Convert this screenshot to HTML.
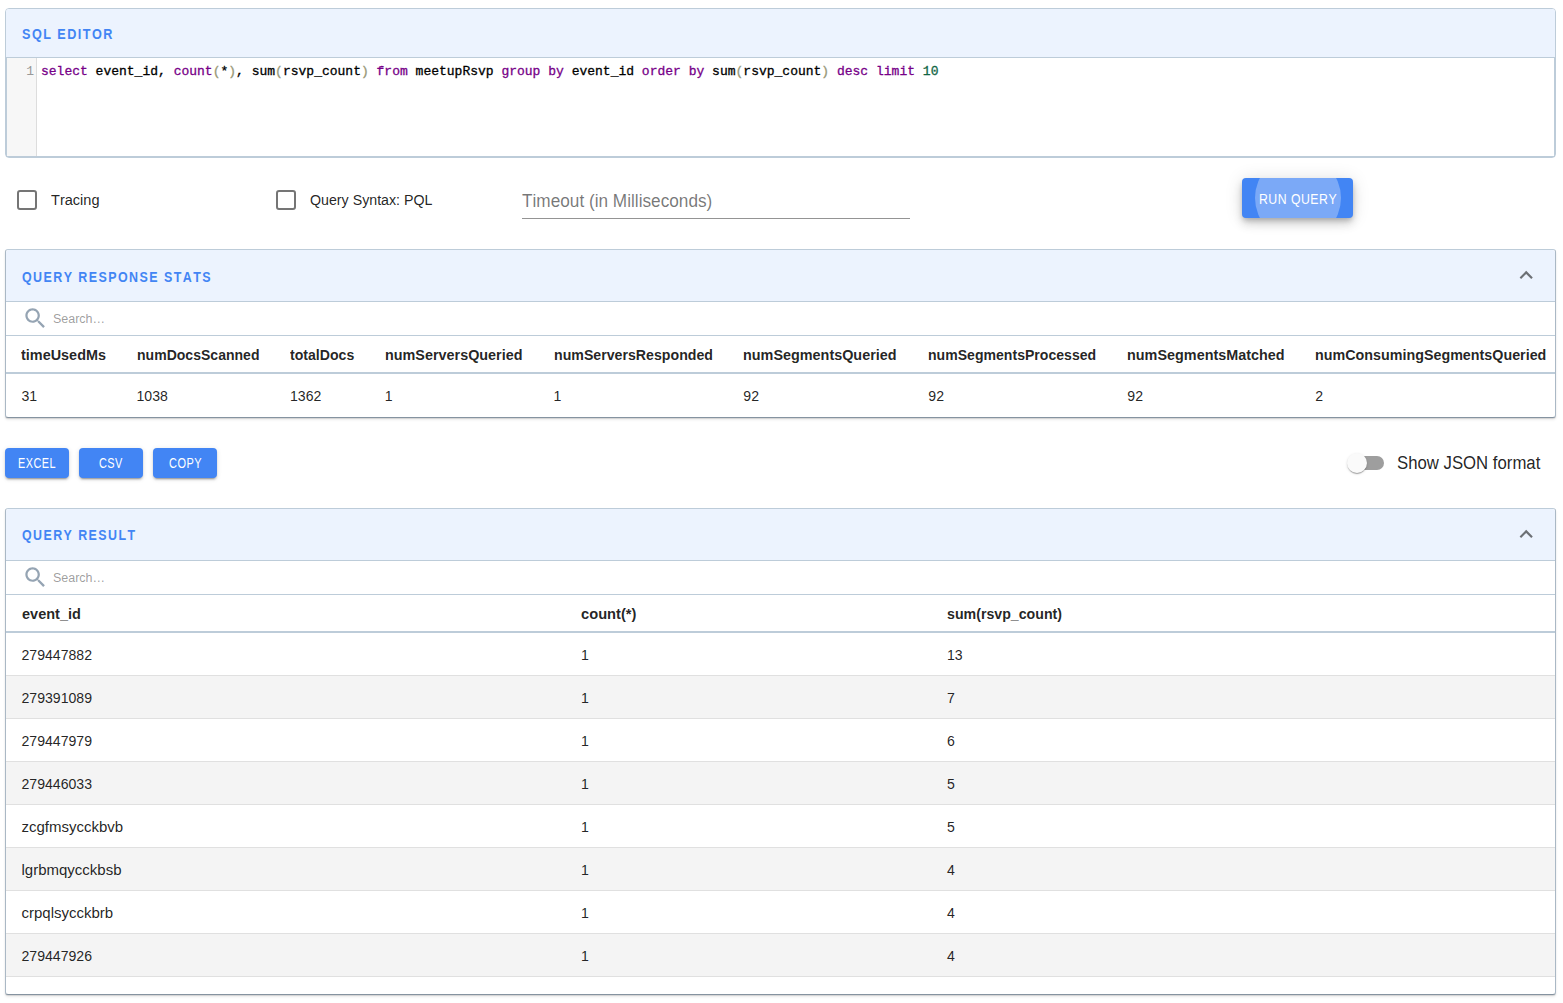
<!DOCTYPE html>
<html><head><meta charset="utf-8"><style>
html,body{margin:0;padding:0;background:#fff;width:1563px;height:1003px;overflow:hidden;position:relative;font-family:"Liberation Sans",sans-serif;}
.t{position:absolute;white-space:pre;transform-origin:0 0;font-kerning:none;}
</style></head><body>
<div style="position:absolute;left:5px;top:8px;width:1551px;height:150px;box-sizing:border-box;border:1px solid #BDCCD9;border-radius:4px;background:#fff;"></div><div style="position:absolute;left:6px;top:9px;width:1549px;height:48px;background:#ECF3FE;border-radius:3px 3px 0 0;"></div><div class="t" style="top:25px;left:21.80px;font-size:15.55px;line-height:17.37px;font-weight:bold;color:#4285F4;letter-spacing:1.8px;transform:scaleX(0.8121);">SQL EDITOR</div><div style="position:absolute;left:6px;top:57px;width:1549px;height:100px;box-sizing:border-box;border:1px solid #BDCCD9;background:#fff;"></div><div style="position:absolute;left:7px;top:58px;width:29px;height:98px;background:#f7f7f7;border-right:1px solid #ddd;"></div><div class="t" style="left:41px;top:65.38px;font-size:13px;line-height:14.73px;font-family:'Liberation Mono',monospace;-webkit-text-stroke:0.3px currentColor;"><span style="color:#708">select</span><span style="color:#000"> event_id, </span><span style="color:#708">count</span><span style="color:#997">(</span><span style="color:#000">*</span><span style="color:#997">)</span><span style="color:#000">, sum</span><span style="color:#997">(</span><span style="color:#000">rsvp_count</span><span style="color:#997">)</span><span style="color:#000"> </span><span style="color:#708">from</span><span style="color:#000"> meetupRsvp </span><span style="color:#708">group</span><span style="color:#000"> </span><span style="color:#708">by</span><span style="color:#000"> event_id </span><span style="color:#708">order</span><span style="color:#000"> </span><span style="color:#708">by</span><span style="color:#000"> sum</span><span style="color:#997">(</span><span style="color:#000">rsvp_count</span><span style="color:#997">)</span><span style="color:#000"> </span><span style="color:#708">desc</span><span style="color:#000"> </span><span style="color:#708">limit</span><span style="color:#000"> </span><span style="color:#164">10</span></div><div class="t" style="left:26.3px;top:64.88px;font-size:13px;line-height:14.73px;font-family:'Liberation Mono',monospace;color:#999;">1</div><svg style="position:absolute;left:17.0px;top:190.2px" width="20" height="20" viewBox="0 0 20 20"><rect x="1" y="1" width="18" height="18" rx="2" ry="2" fill="none" stroke="rgba(0,0,0,0.54)" stroke-width="2"/></svg><div class="t" style="top:191px;left:51.30px;font-size:15.26px;line-height:17.05px;color:rgba(0,0,0,0.87);transform:scaleX(0.9534);">Tracing</div><svg style="position:absolute;left:276.2px;top:190.2px" width="20" height="20" viewBox="0 0 20 20"><rect x="1" y="1" width="18" height="18" rx="2" ry="2" fill="none" stroke="rgba(0,0,0,0.54)" stroke-width="2"/></svg><div class="t" style="top:191px;left:309.60px;font-size:15.26px;line-height:17.05px;color:rgba(0,0,0,0.87);transform:scaleX(0.9320);">Query Syntax: PQL</div><div class="t" style="top:191px;left:522.40px;font-size:18.02px;line-height:20.13px;color:rgba(0,0,0,0.54);transform:scaleX(0.9553);">Timeout (in Milliseconds)</div><div style="position:absolute;left:522px;top:218px;width:388px;height:1px;background:rgba(0,0,0,0.42);"></div><div style="position:absolute;left:1242px;top:178px;width:111px;height:40px;border-radius:4px;background:#4285F4;overflow:hidden;box-shadow:0px 3px 5px -1px rgba(0,0,0,0.2),0px 6px 10px 0px rgba(0,0,0,0.14),0px 1px 18px 0px rgba(0,0,0,0.12);"><div style="position:absolute;left:12.6px;top:-23.2px;width:86.4px;height:86.4px;border-radius:50%;background:rgba(255,255,255,0.3);"></div></div><div class="t" style="top:190px;left:1259.40px;font-size:15.26px;line-height:17.05px;color:#fff;letter-spacing:0.6px;transform:scaleX(0.8055);">RUN QUERY</div><div style="position:absolute;left:5px;top:249px;width:1551px;height:169px;box-sizing:border-box;border:1px solid #BDCCD9;border-radius:4px;background:#fff;border-left-color:#AAB8C5;border-right-color:#AAB8C5;border-bottom-color:#8593A0;border-radius:3px;box-shadow:0px 1px 1px 0px rgba(0,0,0,0.12),0px 2px 3px 0px rgba(0,0,0,0.07);"></div><div style="position:absolute;left:6px;top:250px;width:1549px;height:51px;background:#ECF3FE;border-radius:3px 3px 0 0;"></div><div style="position:absolute;left:6px;top:301px;width:1549px;height:1px;background:#BDCCD9;"></div><div class="t" style="top:268px;left:22.20px;font-size:15.55px;line-height:17.37px;font-weight:bold;color:#4285F4;letter-spacing:1.8px;transform:scaleX(0.8004);">QUERY RESPONSE STATS</div><svg style="position:absolute;left:1512.8px;top:262.3px" width="26.4" height="26.4" viewBox="0 0 24 24"><path d="M7.41 15.41L12 10.83l4.59 4.58L18 14l-6-6-6 6z" fill="rgba(0,0,0,0.54)"/></svg><svg style="position:absolute;left:21.8px;top:305px" width="26.8" height="26.8" viewBox="0 0 24 24"><path fill="#95A4B3" d="M15.5 14h-.79l-.28-.27C15.41 12.59 16 11.11 16 9.5 16 5.91 13.09 3 9.5 3S3 5.91 3 9.5 5.91 16 9.5 16c1.61 0 3.09-.59 4.23-1.57l.27.28v.79l5 4.99L20.49 19l-4.99-5zm-6 0C7.01 14 5 11.99 5 9.5S7.01 5 9.5 5 14 7.01 14 9.5 11.99 14 9.5 14z"/></svg><div class="t" style="top:311px;left:52.70px;font-size:13.52px;line-height:15.10px;color:rgba(0,0,0,0.4);transform:scaleX(0.9227);">Search…</div><div style="position:absolute;left:6px;top:335px;width:1549px;height:1px;background:#BDCCD9;"></div><div class="t" style="top:346px;left:21.40px;font-size:15.41px;line-height:17.22px;font-weight:bold;color:rgba(0,0,0,0.87);transform:scaleX(0.9365);">timeUsedMs</div><div class="t" style="top:389px;left:21.40px;font-size:14.10px;line-height:15.75px;color:rgba(0,0,0,0.87);">31</div><div class="t" style="top:346px;left:136.50px;font-size:15.41px;line-height:17.22px;font-weight:bold;color:rgba(0,0,0,0.87);transform:scaleX(0.9113);">numDocsScanned</div><div class="t" style="top:389px;left:136.50px;font-size:14.10px;line-height:15.75px;color:rgba(0,0,0,0.87);">1038</div><div class="t" style="top:346px;left:290.00px;font-size:15.41px;line-height:17.22px;font-weight:bold;color:rgba(0,0,0,0.87);transform:scaleX(0.9160);">totalDocs</div><div class="t" style="top:389px;left:290.00px;font-size:14.10px;line-height:15.75px;color:rgba(0,0,0,0.87);">1362</div><div class="t" style="top:346px;left:384.80px;font-size:15.41px;line-height:17.22px;font-weight:bold;color:rgba(0,0,0,0.87);transform:scaleX(0.9335);">numServersQueried</div><div class="t" style="top:389px;left:384.80px;font-size:14.10px;line-height:15.75px;color:rgba(0,0,0,0.87);">1</div><div class="t" style="top:346px;left:553.50px;font-size:15.41px;line-height:17.22px;font-weight:bold;color:rgba(0,0,0,0.87);transform:scaleX(0.9192);">numServersResponded</div><div class="t" style="top:389px;left:553.50px;font-size:14.10px;line-height:15.75px;color:rgba(0,0,0,0.87);">1</div><div class="t" style="top:346px;left:743.30px;font-size:15.41px;line-height:17.22px;font-weight:bold;color:rgba(0,0,0,0.87);transform:scaleX(0.9343);">numSegmentsQueried</div><div class="t" style="top:389px;left:743.30px;font-size:14.10px;line-height:15.75px;color:rgba(0,0,0,0.87);">92</div><div class="t" style="top:346px;left:928.30px;font-size:15.41px;line-height:17.22px;font-weight:bold;color:rgba(0,0,0,0.87);transform:scaleX(0.9135);">numSegmentsProcessed</div><div class="t" style="top:389px;left:928.30px;font-size:14.10px;line-height:15.75px;color:rgba(0,0,0,0.87);">92</div><div class="t" style="top:346px;left:1127.30px;font-size:15.41px;line-height:17.22px;font-weight:bold;color:rgba(0,0,0,0.87);transform:scaleX(0.9349);">numSegmentsMatched</div><div class="t" style="top:389px;left:1127.30px;font-size:14.10px;line-height:15.75px;color:rgba(0,0,0,0.87);">92</div><div class="t" style="top:346px;left:1315.30px;font-size:15.41px;line-height:17.22px;font-weight:bold;color:rgba(0,0,0,0.87);transform:scaleX(0.9288);">numConsumingSegmentsQueried</div><div class="t" style="top:389px;left:1315.30px;font-size:14.10px;line-height:15.75px;color:rgba(0,0,0,0.87);">2</div><div style="position:absolute;left:6px;top:372px;width:1549px;height:2px;background:#BDCCD9;"></div><div style="position:absolute;left:5px;top:448px;width:64px;height:30px;border-radius:4px;background:#4285F4;box-shadow:0px 3px 1px -2px rgba(0,0,0,0.2),0px 2px 2px 0px rgba(0,0,0,0.14),0px 1px 5px 0px rgba(0,0,0,0.12);"></div><div class="t" style="top:455px;left:18.40px;font-size:14.54px;line-height:16.24px;color:#fff;letter-spacing:0.6px;transform:scaleX(0.7490);">EXCEL</div><div style="position:absolute;left:79px;top:448px;width:64px;height:30px;border-radius:4px;background:#4285F4;box-shadow:0px 3px 1px -2px rgba(0,0,0,0.2),0px 2px 2px 0px rgba(0,0,0,0.14),0px 1px 5px 0px rgba(0,0,0,0.12);"></div><div class="t" style="top:455px;left:99.41px;font-size:14.54px;line-height:16.24px;color:#fff;letter-spacing:0.6px;transform:scaleX(0.7526);">CSV</div><div style="position:absolute;left:153px;top:448px;width:64px;height:30px;border-radius:4px;background:#4285F4;box-shadow:0px 3px 1px -2px rgba(0,0,0,0.2),0px 2px 2px 0px rgba(0,0,0,0.14),0px 1px 5px 0px rgba(0,0,0,0.12);"></div><div class="t" style="top:455px;left:168.68px;font-size:14.54px;line-height:16.24px;color:#fff;letter-spacing:0.6px;transform:scaleX(0.7562);">COPY</div><div style="position:absolute;left:1350px;top:456px;width:34px;height:14px;border-radius:7px;background:#9e9e9e;"></div><div style="position:absolute;left:1347px;top:453px;width:20px;height:20px;border-radius:50%;background:#fafafa;box-shadow:0px 2px 1px -1px rgba(0,0,0,0.2),0px 1px 1px 0px rgba(0,0,0,0.14),0px 1px 3px 0px rgba(0,0,0,0.12);"></div><div class="t" style="top:453px;left:1396.80px;font-size:17.88px;line-height:19.98px;color:rgba(0,0,0,0.87);transform:scaleX(0.9375);">Show JSON format</div><div style="position:absolute;left:5px;top:508px;width:1551px;height:487px;box-sizing:border-box;border:1px solid #BDCCD9;border-radius:4px;background:#fff;border-left-color:#AAB8C5;border-right-color:#AAB8C5;border-bottom-color:#8593A0;border-radius:3px;box-shadow:0px 1px 1px 0px rgba(0,0,0,0.12),0px 2px 3px 0px rgba(0,0,0,0.07);"></div><div style="position:absolute;left:6px;top:509px;width:1549px;height:51px;background:#ECF3FE;border-radius:3px 3px 0 0;"></div><div style="position:absolute;left:6px;top:560px;width:1549px;height:1px;background:#BDCCD9;"></div><div class="t" style="top:526px;left:22.40px;font-size:15.55px;line-height:17.37px;font-weight:bold;color:#4285F4;letter-spacing:1.8px;transform:scaleX(0.7980);">QUERY RESULT</div><svg style="position:absolute;left:1512.8px;top:521.3px" width="26.4" height="26.4" viewBox="0 0 24 24"><path d="M7.41 15.41L12 10.83l4.59 4.58L18 14l-6-6-6 6z" fill="rgba(0,0,0,0.54)"/></svg><svg style="position:absolute;left:21.8px;top:564px" width="26.8" height="26.8" viewBox="0 0 24 24"><path fill="#95A4B3" d="M15.5 14h-.79l-.28-.27C15.41 12.59 16 11.11 16 9.5 16 5.91 13.09 3 9.5 3S3 5.91 3 9.5 5.91 16 9.5 16c1.61 0 3.09-.59 4.23-1.57l.27.28v.79l5 4.99L20.49 19l-4.99-5zm-6 0C7.01 14 5 11.99 5 9.5S7.01 5 9.5 5 14 7.01 14 9.5 11.99 14 9.5 14z"/></svg><div class="t" style="top:570px;left:52.70px;font-size:13.52px;line-height:15.10px;color:rgba(0,0,0,0.4);transform:scaleX(0.9227);">Search…</div><div style="position:absolute;left:6px;top:594px;width:1549px;height:1px;background:#BDCCD9;"></div><div class="t" style="top:605px;left:21.50px;font-size:15.41px;line-height:17.22px;font-weight:bold;color:rgba(0,0,0,0.87);transform:scaleX(0.9423);">event_id</div><div class="t" style="top:605px;left:580.80px;font-size:15.41px;line-height:17.22px;font-weight:bold;color:rgba(0,0,0,0.87);transform:scaleX(0.9530);">count(*)</div><div class="t" style="top:605px;left:947.10px;font-size:15.41px;line-height:17.22px;font-weight:bold;color:rgba(0,0,0,0.87);transform:scaleX(0.9205);">sum(rsvp_count)</div><div style="position:absolute;left:6px;top:631px;width:1549px;height:2px;background:#BDCCD9;"></div><div style="position:absolute;left:0;top:0;width:1563px;height:994px;overflow:hidden;"><div style="position:absolute;left:6px;top:675px;width:1549px;height:1px;background:#e0e0e0;"></div><div class="t" style="top:648px;left:21.50px;font-size:14.10px;line-height:15.75px;color:rgba(0,0,0,0.87);">279447882</div><div class="t" style="top:648px;left:581.00px;font-size:14.10px;line-height:15.75px;color:rgba(0,0,0,0.87);">1</div><div class="t" style="top:648px;left:947.00px;font-size:14.10px;line-height:15.75px;color:rgba(0,0,0,0.87);">13</div><div style="position:absolute;left:6px;top:676px;width:1549px;height:42px;background:#f4f4f4;"></div><div style="position:absolute;left:6px;top:718px;width:1549px;height:1px;background:#e0e0e0;"></div><div class="t" style="top:691px;left:21.50px;font-size:14.10px;line-height:15.75px;color:rgba(0,0,0,0.87);">279391089</div><div class="t" style="top:691px;left:581.00px;font-size:14.10px;line-height:15.75px;color:rgba(0,0,0,0.87);">1</div><div class="t" style="top:691px;left:947.00px;font-size:14.10px;line-height:15.75px;color:rgba(0,0,0,0.87);">7</div><div style="position:absolute;left:6px;top:761px;width:1549px;height:1px;background:#e0e0e0;"></div><div class="t" style="top:734px;left:21.50px;font-size:14.10px;line-height:15.75px;color:rgba(0,0,0,0.87);">279447979</div><div class="t" style="top:734px;left:581.00px;font-size:14.10px;line-height:15.75px;color:rgba(0,0,0,0.87);">1</div><div class="t" style="top:734px;left:947.00px;font-size:14.10px;line-height:15.75px;color:rgba(0,0,0,0.87);">6</div><div style="position:absolute;left:6px;top:762px;width:1549px;height:42px;background:#f4f4f4;"></div><div style="position:absolute;left:6px;top:804px;width:1549px;height:1px;background:#e0e0e0;"></div><div class="t" style="top:777px;left:21.50px;font-size:14.10px;line-height:15.75px;color:rgba(0,0,0,0.87);">279446033</div><div class="t" style="top:777px;left:581.00px;font-size:14.10px;line-height:15.75px;color:rgba(0,0,0,0.87);">1</div><div class="t" style="top:777px;left:947.00px;font-size:14.10px;line-height:15.75px;color:rgba(0,0,0,0.87);">5</div><div style="position:absolute;left:6px;top:847px;width:1549px;height:1px;background:#e0e0e0;"></div><div class="t" style="top:819px;left:21.50px;font-size:15.00px;line-height:16.76px;color:rgba(0,0,0,0.87);">zcgfmsycckbvb</div><div class="t" style="top:820px;left:581.00px;font-size:14.10px;line-height:15.75px;color:rgba(0,0,0,0.87);">1</div><div class="t" style="top:820px;left:947.00px;font-size:14.10px;line-height:15.75px;color:rgba(0,0,0,0.87);">5</div><div style="position:absolute;left:6px;top:848px;width:1549px;height:42px;background:#f4f4f4;"></div><div style="position:absolute;left:6px;top:890px;width:1549px;height:1px;background:#e0e0e0;"></div><div class="t" style="top:862px;left:21.50px;font-size:15.00px;line-height:16.76px;color:rgba(0,0,0,0.87);">lgrbmqycckbsb</div><div class="t" style="top:863px;left:581.00px;font-size:14.10px;line-height:15.75px;color:rgba(0,0,0,0.87);">1</div><div class="t" style="top:863px;left:947.00px;font-size:14.10px;line-height:15.75px;color:rgba(0,0,0,0.87);">4</div><div style="position:absolute;left:6px;top:933px;width:1549px;height:1px;background:#e0e0e0;"></div><div class="t" style="top:905px;left:21.50px;font-size:15.00px;line-height:16.76px;color:rgba(0,0,0,0.87);">crpqlsycckbrb</div><div class="t" style="top:906px;left:581.00px;font-size:14.10px;line-height:15.75px;color:rgba(0,0,0,0.87);">1</div><div class="t" style="top:906px;left:947.00px;font-size:14.10px;line-height:15.75px;color:rgba(0,0,0,0.87);">4</div><div style="position:absolute;left:6px;top:934px;width:1549px;height:42px;background:#f4f4f4;"></div><div style="position:absolute;left:6px;top:976px;width:1549px;height:1px;background:#e0e0e0;"></div><div class="t" style="top:949px;left:21.50px;font-size:14.10px;line-height:15.75px;color:rgba(0,0,0,0.87);">279447926</div><div class="t" style="top:949px;left:581.00px;font-size:14.10px;line-height:15.75px;color:rgba(0,0,0,0.87);">1</div><div class="t" style="top:949px;left:947.00px;font-size:14.10px;line-height:15.75px;color:rgba(0,0,0,0.87);">4</div><div style="position:absolute;left:6px;top:1019px;width:1549px;height:1px;background:#e0e0e0;"></div><div class="t" style="top:992px;left:21.50px;font-size:14.10px;line-height:15.75px;color:rgba(0,0,0,0.87);">279447943</div><div class="t" style="top:992px;left:581.00px;font-size:14.10px;line-height:15.75px;color:rgba(0,0,0,0.87);">1</div><div class="t" style="top:992px;left:947.00px;font-size:14.10px;line-height:15.75px;color:rgba(0,0,0,0.87);">4</div></div>
</body></html>
